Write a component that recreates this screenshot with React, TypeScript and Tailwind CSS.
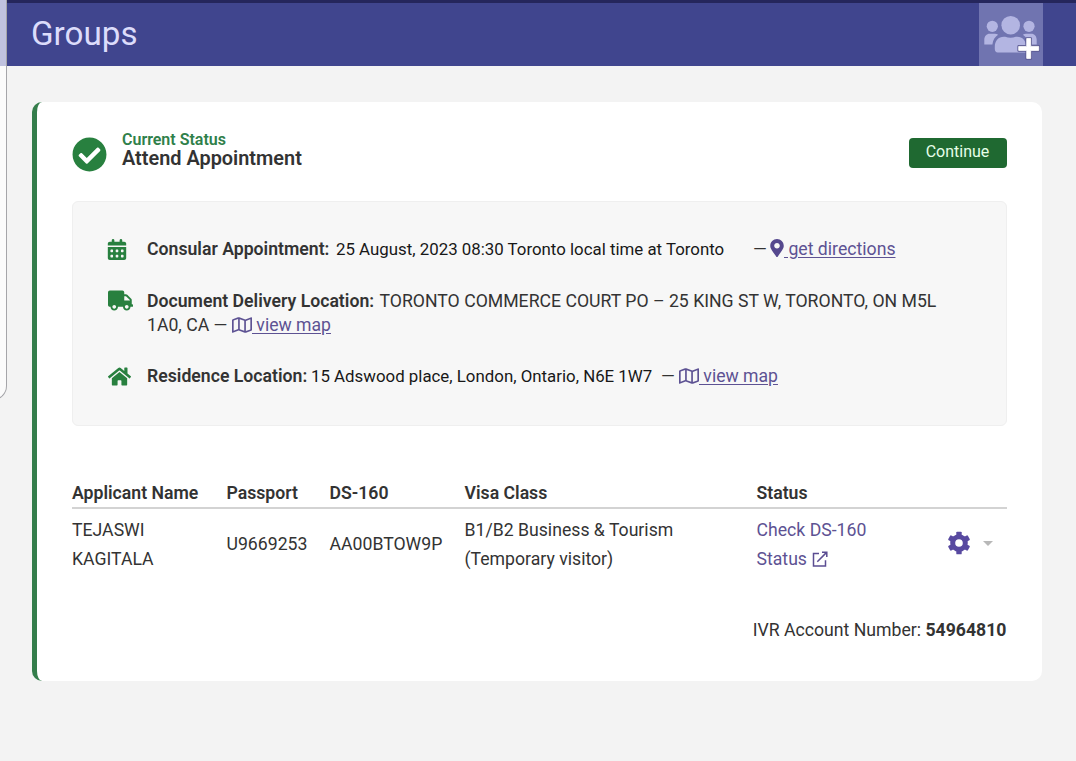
import React from "react";
import { FaCheckCircle, FaTruck, FaHome, FaRegMap, FaMapMarkerAlt } from "react-icons/fa";
import { FaCalendarDays } from "react-icons/fa6";

function GroupAddIcon() {
  return (
    <svg viewBox="0 0 64 63" className="h-[63px] w-16">
      <g fill="#b3b5e2">
        <circle cx="13.3" cy="23.3" r="5.6" />
        <circle cx="50" cy="23.3" r="5.6" />
        <circle cx="31.7" cy="22.2" r="9.3" />
        <path d="M5.3 41.4v-4.600c0-3.400 2.200-6 5.400-6h5.200c1.200 0 2.300.4 3.200 1-3 1.900-5.200 5-5.700 9.600z" />
        <path d="M57.700 41.400v-4.600c0-3.400-2.200-6-5.400-6h-5.200c-1.200 0-2.300.4-3.200 1 3 1.900 5.200 5 5.700 9.600z" />
        <path d="M15.800 46v-2.500c0-5.600 3.700-9.800 9-9.800h1.400c3.400 1.400 7.200 1.400 10.600 0h1.400c5.300 0 9 4.200 9 9.800v6h-28.600c-1.600 0-2.800-1.400-2.800-3.500z" />
      </g>
      <path d="M47.700 35.500h4v7.900h8v4h-8v8h-4v-8h-8v-4h8z" fill="#595891" stroke="#595891" strokeWidth="2.600" strokeLinejoin="round" />
      <path d="M47.700 35.500h4v7.900h8v4h-8v8h-4v-8h-8v-4h8z" fill="#fff" stroke="#fff" strokeWidth="0.800" strokeLinejoin="round" />
    </svg>
  );
}

function GearIcon() {
  return (
    <svg viewBox="0 0 24 24" className="h-6 w-6" fill="#5849a0">
      <circle cx="12" cy="12" r="6.300" fill="none" stroke="#5849a0" strokeWidth="5" />
      <rect x="9.300" y="0.700" width="5.400" height="5" rx="0.900" />
      <rect x="9.300" y="0.700" width="5.400" height="5" rx="0.900" transform="rotate(60 12 12)" />
      <rect x="9.300" y="0.700" width="5.400" height="5" rx="0.900" transform="rotate(120 12 12)" />
      <rect x="9.300" y="0.700" width="5.400" height="5" rx="0.900" transform="rotate(180 12 12)" />
      <rect x="9.300" y="0.700" width="5.400" height="5" rx="0.900" transform="rotate(240 12 12)" />
      <rect x="9.300" y="0.700" width="5.400" height="5" rx="0.900" transform="rotate(300 12 12)" />
    </svg>
  );
}

function ExternalIcon() {
  return (
    <svg viewBox="0 0 16 16" className="ml-[5px] h-4 w-4" fill="none" stroke="#5b4d92" strokeWidth="1.500">
      <path d="M7 2.500H1.500V15h12V9.300" />
      <path d="M10 1.200h4.800V6M14.600 1.400L5.300 10.700" />
    </svg>
  );
}

function MapLink() {
  return (
    <a className="flex text-[#5d5293]">
      <FaRegMap className="mt-[3px] h-[18px] w-5" />
      <span className="text-[17.600px] whitespace-pre underline underline-offset-2"> view map</span>
    </a>
  );
}

export default function App() {
  return (
    <div className="relative h-[761px] w-[1076px] overflow-hidden bg-[#f3f3f3] font-['Roboto',sans-serif] text-[17.660px] whitespace-nowrap text-[#333]">
      <header className="flex h-[66px] items-start justify-between border-t-[3px] border-[#25265c] bg-[#40458e] pr-[33px] pl-[31px]">
        <h1 className="pt-[11px] text-[33.200px] leading-10 text-[#dcdcfb]">Groups</h1>
        <button className="h-[63px] w-16 bg-[#7074b0]">
          <GroupAddIcon />
        </button>
      </header>
      <div className="absolute -top-5 -left-5 h-[420px] w-[27px] overflow-hidden rounded-br-[14px] border-r border-b border-[#a5a5a9] bg-[#fbfbfb]">
        <div className="h-[86px] bg-[#c0c2df]" />
      </div>

      <main className="mt-9 ml-8 h-[579px] w-[1010px] rounded-[10px] border-l-[5px] border-[#347d4b] bg-white pt-[27px] pr-[35px] pl-[35px]">
        <div className="flex h-[72px] justify-between">
          <div className="flex">
            <FaCheckCircle className="mt-[8px] h-[35px] w-[35px] text-[#28803f]" />
            <div className="ml-[15px] pt-[2px]">
              <div className="text-[16px] leading-[18px] font-semibold text-[#2f804a]">Current Status</div>
              <div className="text-[19.900px] leading-[19px] font-semibold">Attend Appointment</div>
            </div>
          </div>
          <button className="mt-[9px] mr-[0.500px] h-[30px] w-[98px] rounded bg-[#1f6931] pb-[3px] text-[16px] leading-[27px] text-[#e6ffe9]">Continue</button>
        </div>

        <section className="h-[225px] w-[935px] rounded-md border border-[#efefef] bg-[#f7f7f7] pt-[35px] pl-[34px] leading-6">
          <div className="flex h-[52px]">
            <FaCalendarDays className="mt-[2px] mr-5 h-[21px] w-5 text-[#28803f]" />
            <div className="w-[189px] font-semibold">Consular Appointment:</div>
            <div className="w-[417px] text-[16.850px] leading-[25px] text-[#181818]">25 August, 2023 08:30 Toronto local time at Toronto</div>
            <div className="w-[17px]">—</div>
            <FaMapMarkerAlt className="mt-[2px] h-[18px] w-[14px] text-[#55488e]" />
            <a className="whitespace-pre text-[#5d5293] underline underline-offset-2"> get directions</a>
          </div>
          <div className="flex h-[75px]">
            <FaTruck className="mt-px ml-px mr-[14px] h-[21px] w-[25px] text-[#28803f]" />
            <div>
              <div className="flex">
                <div className="w-[232.500px] font-semibold">Document Delivery Location:</div>
                <div>TORONTO COMMERCE COURT PO – 25 KING ST W, TORONTO, ON M5L</div>
              </div>
              <div className="flex">
                <div className="w-[85px]">1A0, CA —</div>
                <MapLink />
              </div>
            </div>
          </div>
          <div className="flex">
            <FaHome className="mt-[2px] ml-px mr-[16px] h-[21px] w-[23px] text-[#28803f]" />
            <div className="w-[164px] font-semibold">Residence Location:</div>
            <div className="w-[350px] text-[16.850px] text-[#181818]">15 Adswood place, London, Ontario, N6E 1W7</div>
            <div className="w-[18px]">—</div>
            <MapLink />
          </div>
        </section>

        <div className="mt-[52px] grid h-[31px] w-[935px] grid-cols-[154.500px_103px_135px_292px_1fr] border-b-2 border-[#d3d3d3] pt-[3px] leading-6 font-semibold">
          <span>Applicant Name</span>
          <span>Passport</span>
          <span>DS-160</span>
          <span>Visa Class</span>
          <span>Status</span>
        </div>
        <div className="mt-px grid h-[69px] w-[935px] grid-cols-[154.500px_103px_135px_292px_190px_1fr] items-center leading-[29px]">
          <span>TEJASWI<br />KAGITALA</span>
          <span>U9669253</span>
          <span>AA00BTOW9P</span>
          <span>B1/B2 Business &amp; Tourism<br />(Temporary visitor)</span>
          <a className="text-[#5d5293]">
            Check DS-160
            <span className="flex items-center">
              Status
              <ExternalIcon />
            </span>
          </a>
          <div className="flex items-center pb-[3px]">
            <GearIcon />
            <span className="mt-px ml-3 border-x-[5.500px] border-t-[5.500px] border-x-transparent border-t-[#b8b8b8]" />
          </div>
        </div>
        <div className="mt-[39px] w-[934.500px] text-right leading-6">
          IVR Account Number: <b className="font-bold">54964810</b>
        </div>
      </main>
    </div>
  );
}
